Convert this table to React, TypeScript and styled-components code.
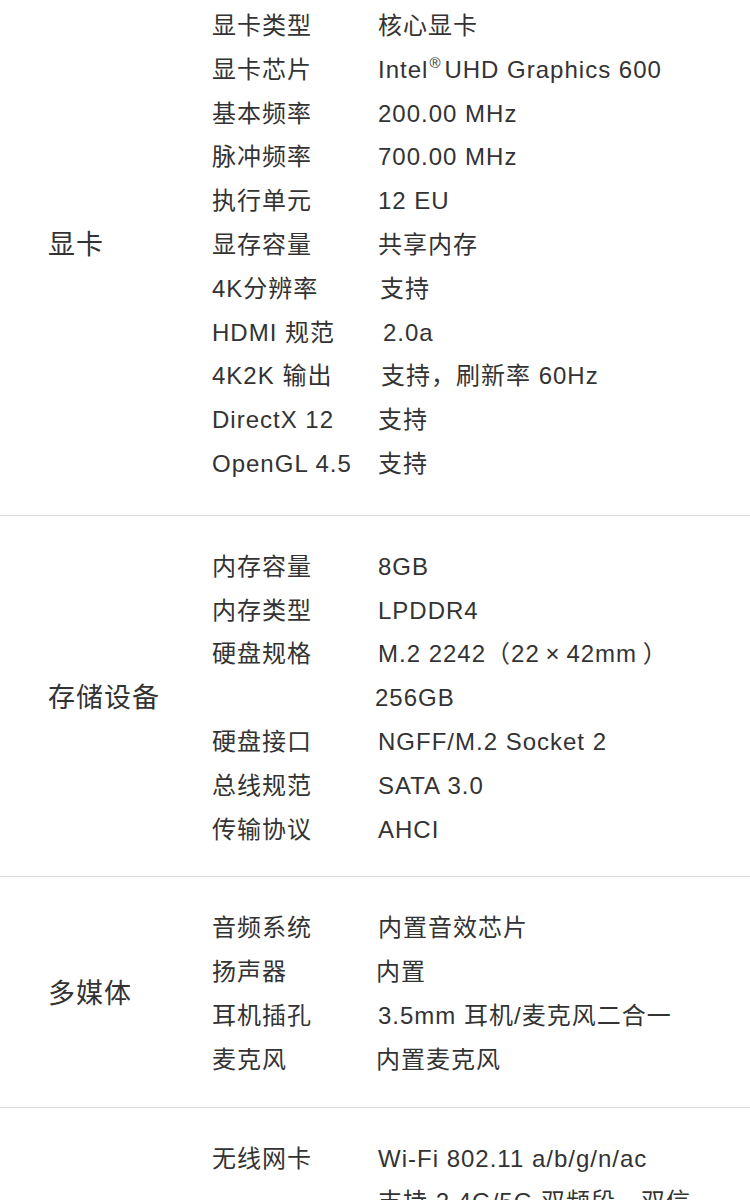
import React from 'react';
import styled, { createGlobalStyle } from 'styled-components';

const GlobalStyle = createGlobalStyle`
  html, body {
    margin: 0;
    padding: 0;
    background: #fff;
  }
  body {
    font-family: "Liberation Sans", "Noto Sans CJK SC", sans-serif;
    color: #333;
    overflow: hidden;
  }
`;

type Row = { label?: string; value: React.ReactNode; indent?: number };
type Group = { title: string; rows: Row[] };

const groups: Group[] = [
  {
    title: '显卡',
    rows: [
      { label: '显卡类型', value: '核心显卡' },
      { label: '显卡芯片', value: <>Intel<sup>®</sup>UHD Graphics 600</> },
      { label: '基本频率', value: '200.00 MHz' },
      { label: '脉冲频率', value: '700.00 MHz' },
      { label: '执行单元', value: '12 EU' },
      { label: '显存容量', value: '共享内存' },
      { label: '4K分辨率', value: '支持', indent: 2 },
      { label: 'HDMI 规范', value: '2.0a', indent: 5 },
      { label: '4K2K 输出', value: '支持，刷新率 60Hz', indent: 3 },
      { label: 'DirectX 12', value: '支持' },
      { label: 'OpenGL 4.5', value: '支持' },
    ],
  },
  {
    title: '存储设备',
    rows: [
      { label: '内存容量', value: '8GB' },
      { label: '内存类型', value: 'LPDDR4' },
      { label: '硬盘规格', value: 'M.2 2242（22\u2009×\u200942mm\u2009）' },
      { value: '256GB', indent: -3 },
      { label: '硬盘接口', value: 'NGFF/M.2 Socket 2' },
      { label: '总线规范', value: 'SATA 3.0' },
      { label: '传输协议', value: 'AHCI' },
    ],
  },
  {
    title: '多媒体',
    rows: [
      { label: '音频系统', value: '内置音效芯片' },
      { label: '扬声器', value: '内置', indent: -2 },
      { label: '耳机插孔', value: '3.5mm 耳机/麦克风二合一' },
      { label: '麦克风', value: '内置麦克风', indent: -2 },
    ],
  },
  {
    title: '网络连接',
    rows: [
      { label: '无线网卡', value: 'Wi-Fi 802.11 a/b/g/n/ac' },
      { value: '支持 2.4G/5G 双频段，双信道同时工作' },
      { label: '蓝牙', value: '蓝牙 4.2' },
      { label: '有线网卡', value: '无' },
    ],
  },
];

const List = styled.div`
  display: flex;
  flex-direction: column;
`;

const Section = styled.section<{ $first?: boolean }>`
  display: flex;
  align-items: center;
  padding: ${(p) => (p.$first ? '4px 0 29px' : '29px 0 25px')};
  border-top: ${(p) => (p.$first ? 'none' : '1px solid #dedede')};
`;

const Category = styled.div`
  flex: 0 0 164px;
  padding-left: 48px;
  font-size: 27px;
  letter-spacing: 1px;
  line-height: 40px;
  color: #333;
  white-space: nowrap;
`;

const Rows = styled.div`
  flex: 1;
  display: flex;
  flex-direction: column;
`;

const SpecRow = styled.div`
  display: grid;
  grid-template-columns: 166px 316px;
  min-height: 43.8px;
  line-height: 43.8px;
  font-size: 24px;
  letter-spacing: 1px;
  color: #333;
`;

const Label = styled.span`
  white-space: nowrap;
`;

const Value = styled.span<{ $indent: number }>`
  padding-left: ${(p) => Math.max(p.$indent, 0)}px;
  margin-left: ${(p) => Math.min(p.$indent, 0)}px;

  sup {
    font-size: 15px;
    vertical-align: 10px;
    line-height: 0;
    margin: 0 3px 0 1px;
  }
`;

export default function App() {
  return (
    <>
      <GlobalStyle />
      <List>
        {groups.map((g, i) => (
          <Section key={g.title} $first={i === 0}>
            <Category>{g.title}</Category>
            <Rows>
              {g.rows.map((r, j) => (
                <SpecRow key={j}>
                  <Label>{r.label}</Label>
                  <Value $indent={r.indent ?? 0}>{r.value}</Value>
                </SpecRow>
              ))}
            </Rows>
          </Section>
        ))}
      </List>
    </>
  );
}
